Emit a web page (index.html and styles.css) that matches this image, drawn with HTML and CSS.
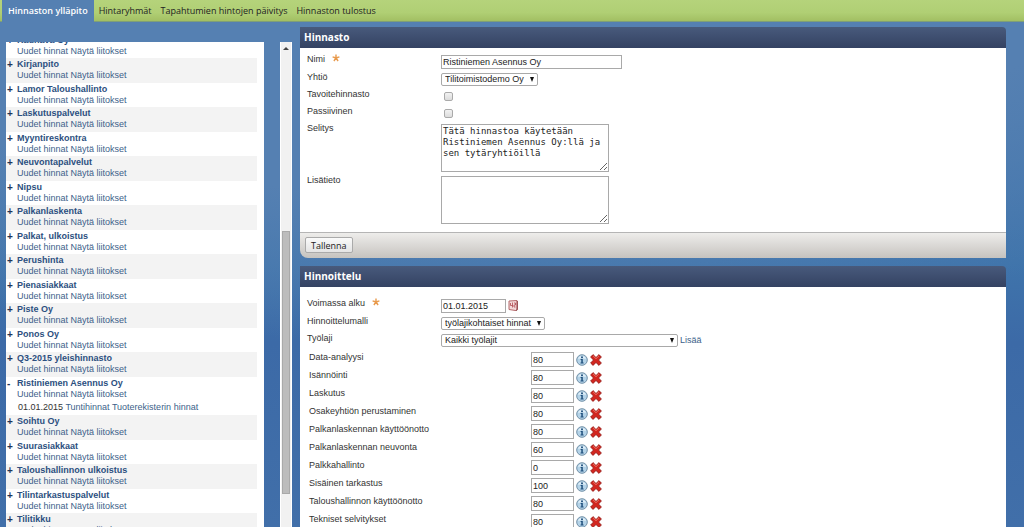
FILE: index.html
```html
<!DOCTYPE html>
<html lang="fi">
<head>
    <meta charset="UTF-8">
    <meta name="viewport" content="width=device-width, initial-scale=1.0">
    <title>Hinnaston ylläpito</title>
    <link rel="stylesheet" href="styles.css">
</head>
<body>
    <svg class="symbols" aria-hidden="true">
        <symbol id="star" viewBox="0 0 8 8">
            <path d="M4 4V0.5M4 4L7.4 2.9M4 4L6.1 7M4 4L1.9 7M4 4L0.6 2.9" stroke="#e89a4c" stroke-width="1.4" fill="none"/>
        </symbol>
        <symbol id="calendar" viewBox="0 0 10 11">
            <path d="M1 1L9 0.5V9.5L7.5 10.5L1 9.5Z" fill="#f3d9d9" stroke="#b5686b"/>
            <path d="M9.3 1V9.8L7.5 10.8" fill="none" stroke="#8c3b40"/>
            <path d="M2.5 3V5.5H4.5M4.5 2.5V7.5M6 3H7.5V5H6V7H7.5" fill="none" stroke="#b04a50" stroke-width="0.8"/>
        </symbol>
        <symbol id="info" viewBox="0 0 12 12">
            <circle cx="6" cy="6" r="5.3" fill="#b4d3e8" stroke="#7391a8"/>
            <path d="M2 5A4.2 4.2 0 0 1 10 5Q6 3.5 2 5" fill="#e2f0f8"/>
            <circle cx="6" cy="3.2" r="1" fill="#1f4f7c"/>
            <path d="M4.6 5H6.8V8.6H7.6V9.5H4.5V8.6H5.3V5.9H4.6Z" fill="#1f4f7c"/>
        </symbol>
        <symbol id="delete" viewBox="0 0 12 12">
            <path d="M3 0.6L6 3.5L9 0.6L11.4 3L8.5 6L11.4 9L9 11.4L6 8.5L3 11.4L0.6 9L3.5 6L0.6 3Z" fill="#d3261f" stroke="#8d1512" stroke-width="0.8"/>
            <path d="M3 1.8L6 4.7L9 1.8" fill="none" stroke="#ee7a6d" stroke-width="0.9"/>
        </symbol>
    </svg>

    <nav class="tabs">
        <a href="#" class="active">Hinnaston ylläpito</a>
        <a href="#">Hintaryhmät</a>
        <a href="#">Tapahtumien hintojen päivitys</a>
        <a href="#">Hinnaston tulostus</a>
    </nav>

    <div class="layout">
        <aside class="sidebar">
            <div class="list-box">
                <ul class="price-lists" id="priceLists"></ul>
            </div>
            <div class="scrollbar" aria-hidden="true">
                <div class="scroll-up"></div>
                <div class="scroll-gap"></div>
                <div class="scroll-thumb"></div>
                <div class="scroll-end"></div>
            </div>
        </aside>

        <main class="content">
            <form class="panel">
                <h2>Hinnasto</h2>
                <div class="fields">
                    <div class="row">
                        <label for="nimi">Nimi <svg class="star"><use href="#star"/></svg></label>
                        <div class="control"><input type="text" id="nimi" class="name" value="Ristiniemen Asennus Oy"></div>
                    </div>
                    <div class="row">
                        <label for="yhtio">Yhtiö</label>
                        <div class="control"><span class="select company"><select id="yhtio"><option>Tilitoimistodemo Oy</option></select></span></div>
                    </div>
                    <div class="row">
                        <label for="tavoite">Tavoitehinnasto</label>
                        <div class="control"><input type="checkbox" id="tavoite"></div>
                    </div>
                    <div class="row">
                        <label for="passiivinen">Passiivinen</label>
                        <div class="control"><input type="checkbox" id="passiivinen"></div>
                    </div>
                    <div class="row">
                        <label for="selitys">Selitys</label>
                        <div class="control"><textarea id="selitys">Tätä hinnastoa käytetään Ristiniemen Asennus Oy:llä ja sen tytäryhtiöillä</textarea></div>
                    </div>
                    <div class="row">
                        <label for="lisatieto">Lisätieto</label>
                        <div class="control"><textarea id="lisatieto"></textarea></div>
                    </div>
                </div>
                <div class="panel-footer">
                    <button type="button">Tallenna</button>
                </div>
            </form>

            <form class="panel">
                <h2>Hinnoittelu</h2>
                <div class="fields pricing">
                    <div class="row">
                        <label for="alku">Voimassa alku <svg class="star"><use href="#star"/></svg></label>
                        <div class="control">
                            <input type="text" id="alku" class="date" value="01.01.2015">
                            <svg class="calendar"><use href="#calendar"/></svg>
                        </div>
                    </div>
                    <div class="row">
                        <label for="malli">Hinnoittelumalli</label>
                        <div class="control"><span class="select model"><select id="malli"><option>työlajikohtaiset hinnat</option></select></span></div>
                    </div>
                    <div class="row">
                        <label for="tyolaji">Työlaji</label>
                        <div class="control">
                            <span class="select work"><select id="tyolaji"><option>Kaikki työlajit</option></select></span>
                            <a href="#">Lisää</a>
                        </div>
                    </div>
                    <div class="prices" id="prices"></div>
                </div>
            </form>
        </main>
    </div>

    <script src="script.js"></script>
</body>
</html>
```
FILE: styles.css
```css
* {
    box-sizing: border-box;
}
body {
    margin: 0;
    height: 100vh;
    overflow: hidden;
    display: flex;
    flex-direction: column;
    font-family: "Liberation Sans", Arial, sans-serif;
    font-size: 9px;
    line-height: 12px;
    color: #333;
    background:
        radial-gradient(ellipse 1400px 500px at 40% -60px, #5580b2 0, #5580b2 50%, transparent 80%),
        linear-gradient(#4a7ab0, #3f74ab 50%, #3c6aa7 65%, #416fa9);
}
a {
    color: #3d5f8a;
    text-decoration: none;
}
.symbols {
    position: absolute;
    width: 0;
    height: 0;
}

/* tabs */
.tabs {
    display: flex;
    flex: none;
    height: 22px;
    padding-left: 2px;
    background: linear-gradient(#b5d37b, #b0cf74 60%, #a2bf63);
    border-bottom: 1px solid #7f9f78;
    font-family: "Open Sans", Verdana, sans-serif;
    font-size: 9px;
    line-height: 21px;
}
.tabs a {
    color: #222;
    margin-right: 9px;
}
.tabs a.active {
    margin-right: 5px;
    height: 22px;
    padding: 0 6px;
    background: #5580b2;
    color: #fff;
    font-weight: 600;
}

.layout {
    flex: 1;
    min-height: 0;
    display: flex;
}

/* left list */
.sidebar {
    flex: none;
    display: flex;
    justify-content: space-between;
    width: 292px;
    margin-right: 8px;
    padding: 20px 0 0 6px;
}
.list-box {
    width: 258px;
    padding-right: 7px;
    overflow: hidden;
    background: #fff;
}
.price-lists {
    margin: -8px 0 0;
    padding: 0;
    list-style: none;
}
.price-lists li {
    position: relative;
    padding-left: 11px;
    white-space: nowrap;
}
.price-lists li:nth-child(even) {
    padding-bottom: 1px;
    background: #f3f3f3;
}
.price-lists .title {
    height: 11px;
}
.price-lists .title a {
    color: #2c4f80;
    font-weight: bold;
}
.price-lists .links {
    height: 13px;
}
.price-lists .toggle {
    position: absolute;
    left: 1px;
    top: 0;
    padding: 0;
    border: 0;
    background: none;
    font: bold 10px/13px "Liberation Sans", Arial, sans-serif;
    color: #1f3556;
}
.price-lists .detail {
    height: 14px;
    padding-left: 1px;
}
.scrollbar {
    display: flex;
    flex-direction: column;
    width: 12px;
    padding: 0 1px;
    background: #f1f1f1;
    border: solid #fff;
    border-width: 0 1px;
}
.scroll-up {
    align-self: center;
    margin-top: 5px;
    border: 3px solid transparent;
    border-top: 0;
    border-bottom-color: #444;
}
.scroll-gap {
    flex: 182;
}
.scroll-thumb {
    flex: 262;
    background: #bcbcbc;
    border: 1px solid #a9a9a9;
}
.scroll-end {
    flex: 33;
}

/* panels */
.content {
    flex: 1;
    min-width: 0;
    padding: 5px 18px 0 0;
}
.panel {
    margin: 0 0 8px;
}
.panel h2 {
    margin: 0;
    padding-left: 4px;
    height: 21px;
    background: linear-gradient(#485a7c, #344262);
    border-top-right-radius: 4px;
    color: #fff;
    font: bold 10px/20px "Open Sans", Verdana, sans-serif;
}
.fields {
    padding: 5px 7px 6px;
    background: #fff;
}
.fields.pricing {
    padding-top: 10px;
}
.row {
    display: grid;
    grid-template-columns: 134px 1fr;
    align-items: start;
}
.control {
    display: flex;
    padding: 2px 0;
}
.star {
    width: 8px;
    height: 8px;
    margin-left: 4px;
}
input[type="text"],
textarea,
select {
    margin: 0;
    border: 1px solid #a9a9a9;
    background: #fff;
    color: #222;
    font: 9px/12px "Liberation Sans", Arial, sans-serif;
}
input[type="text"] {
    height: 14px;
    padding: 0 1px;
}
.name {
    width: 181px;
}
.date {
    width: 65px;
}
input[type="checkbox"] {
    appearance: none;
    width: 9px;
    height: 9px;
    margin: 2px 3px;
    border: 1px solid #aaa;
    border-radius: 2px;
    background: linear-gradient(#f2f2f2, #dcdcdc);
}
input[type="checkbox"]:checked {
    background: #3d5f8a;
}
textarea {
    width: 168px;
    height: 48px;
    padding: 1px;
    font: 9px/11px "DejaVu Sans Mono", monospace;
}
.select {
    position: relative;
    display: block;
}
.select select {
    appearance: none;
    display: block;
    width: 100%;
    height: 13px;
    padding: 0 3px;
    border-radius: 2px;
    line-height: 11px;
}
.select::after {
    content: "";
    position: absolute;
    right: 4px;
    top: 4px;
    border: 2px solid transparent;
    border-top: 5px solid #111;
    border-bottom: 0;
    pointer-events: none;
}
.company {
    width: 97px;
}
.model {
    width: 104px;
}
.work {
    width: 237px;
    margin-right: 2px;
}
.calendar {
    width: 10px;
    height: 11px;
    margin: 1px 2px;
}
.panel-footer {
    height: 26px;
    padding: 4px 5px;
    background: linear-gradient(#eeedeb, #c6c3bf);
    border-top: 1px solid #b5b5b5;
    border-bottom-left-radius: 8px;
}
.panel-footer button {
    display: block;
    height: 16px;
    padding: 0 5px;
    border: 1px solid #aaa;
    border-radius: 2px;
    background: linear-gradient(#fafafa, #e4e4e4);
    font: 9px/13px "Open Sans", Verdana, sans-serif;
    color: #222;
}

/* work type prices */
.prices {
    padding: 1px 0 0 2px;
}
.price-row {
    display: grid;
    grid-template-columns: 220px 43px 12px 12px;
    column-gap: 2px;
    align-items: start;
    height: 18px;
}
.price-row label {
    padding-top: 1px;
}
.price-row input[type="text"] {
    width: 43px;
    height: 15px;
    margin-top: 2px;
}
.price-row button {
    width: 12px;
    height: 12px;
    margin-top: 4px;
    padding: 0;
    border: 0;
    background: none;
}
.price-row svg {
    display: block;
    width: 12px;
    height: 12px;
}
```
FILE: script.js
```js
const priceLists = [
    "Kauhava Oy", "Kirjanpito", "Lamor Taloushallinto", "Laskutuspalvelut",
    "Myyntireskontra", "Neuvontapalvelut", "Nipsu", "Palkanlaskenta",
    "Palkat, ulkoistus", "Perushinta", "Pienasiakkaat", "Piste Oy", "Ponos Oy",
    "Q3-2015 yleishinnasto", "Ristiniemen Asennus Oy", "Soihtu Oy",
    "Suurasiakkaat", "Taloushallinnon ulkoistus", "Tilintarkastuspalvelut", "Tilitikku"
];
const openList = "Ristiniemen Asennus Oy";

document.getElementById("priceLists").innerHTML = priceLists.map(name => `
    <li>
        <button type="button" class="toggle">${name === openList ? "-" : "+"}</button>
        <div class="title"><a href="#">${name}</a></div>
        <div class="links"><a href="#">Uudet hinnat</a> <a href="#">Näytä liitokset</a></div>
        ${name === openList ? `<div class="detail">01.01.2015 <a href="#">Tuntihinnat</a> <a href="#">Tuoterekisterin hinnat</a></div>` : ""}
    </li>`).join("");

const prices = [
    ["Data-analyysi", 80], ["Isännöinti", 80], ["Laskutus", 80],
    ["Osakeyhtiön perustaminen", 80], ["Palkanlaskennan käyttöönotto", 80],
    ["Palkanlaskennan neuvonta", 60], ["Palkkahallinto", 0],
    ["Sisäinen tarkastus", 100], ["Taloushallinnon käyttöönotto", 80],
    ["Tekniset selvitykset", 80]
];

document.getElementById("prices").innerHTML = prices.map(([name, price], i) => `
    <div class="price-row">
        <label for="price${i}">${name}</label>
        <input type="text" id="price${i}" value="${price}">
        <button type="button" aria-label="Tiedot"><svg><use href="#info"/></svg></button>
        <button type="button" aria-label="Poista"><svg><use href="#delete"/></svg></button>
    </div>`).join("");
```
